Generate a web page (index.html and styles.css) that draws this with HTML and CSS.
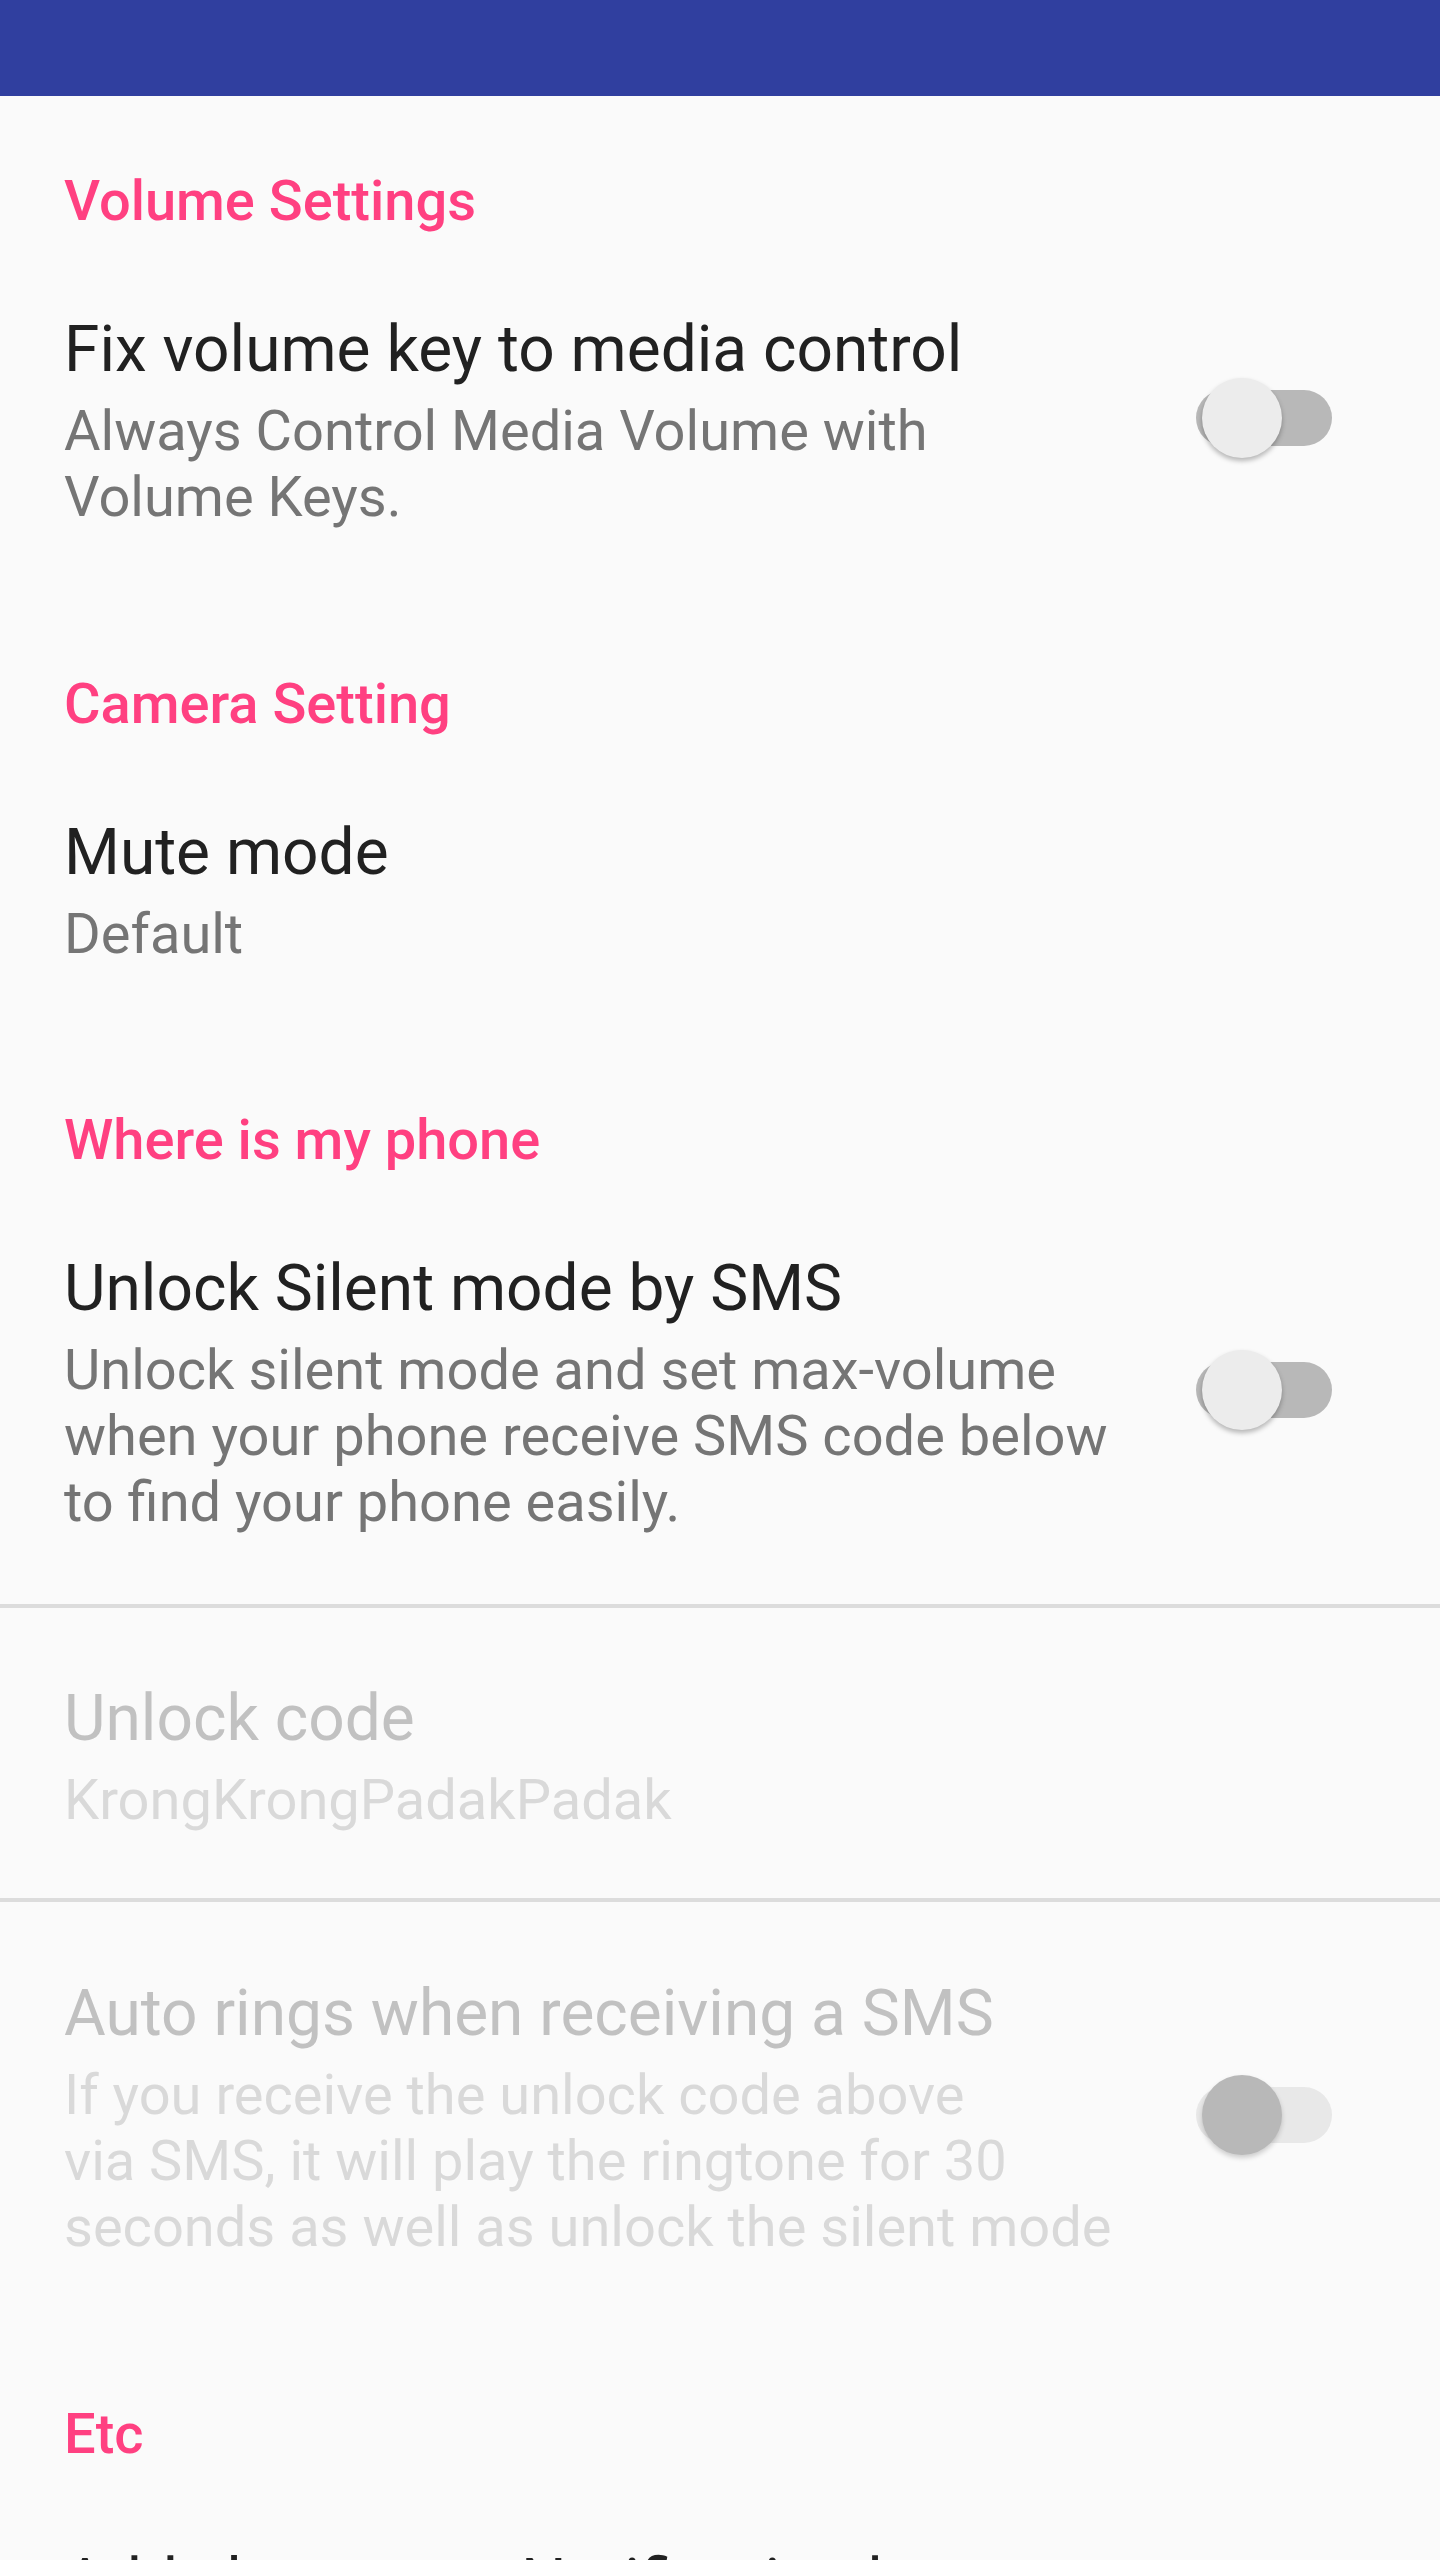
FILE: index.html
```html
<!DOCTYPE html>
<html lang="en">
<head>
    <meta charset="UTF-8">
    <meta name="viewport" content="width=device-width, initial-scale=1">
    <title>Settings</title>
    <link rel="stylesheet" href="styles.css">
</head>
<body>
    <div class="status-bar"></div>

    <div class="prefs">
        <div class="category">Volume Settings</div>
        <div class="pref pref-switch">
            <div class="pref-text">
                <div class="pref-title">Fix volume key to media control</div>
                <div class="pref-summary">Always Control Media Volume with Volume Keys.</div>
            </div>
            <div class="switch"><span class="thumb"></span></div>
        </div>

        <div class="category">Camera Setting</div>
        <div class="pref">
            <div class="pref-text">
                <div class="pref-title">Mute mode</div>
                <div class="pref-summary">Default</div>
            </div>
        </div>

        <div class="category">Where is my phone</div>
        <div class="pref pref-switch">
            <div class="pref-text">
                <div class="pref-title">Unlock Silent mode by SMS</div>
                <div class="pref-summary">Unlock silent mode and set max-volume when your phone receive SMS code below to find your phone easily.</div>
            </div>
            <div class="switch"><span class="thumb"></span></div>
        </div>
        <div class="divider"></div>
        <div class="pref pref-edit disabled">
            <div class="pref-text">
                <div class="pref-title">Unlock code</div>
                <div class="pref-summary">KrongKrongPadakPadak</div>
            </div>
        </div>
        <div class="divider"></div>
        <div class="pref pref-switch disabled">
            <div class="pref-text">
                <div class="pref-title">Auto rings when receiving a SMS</div>
                <div class="pref-summary">If you receive the unlock code above<br>via SMS, it will play the ringtone for 30<br>seconds as well as unlock the silent mode</div>
            </div>
            <div class="switch"><span class="thumb"></span></div>
        </div>

        <div class="category">Etc</div>
        <div class="pref">
            <div class="pref-text">
                <div class="pref-title">Add shortcut to Notification bar</div>
            </div>
        </div>
    </div>
</body>
</html>
```

FILE: styles.css
```css
body {
    margin: 0;
    padding: 0;
    background-color: #fafafa;
    font-family: Roboto, "Noto Sans", sans-serif;
}

.status-bar {
    height: 96px;
    background-color: #303f9f;
}

.category {
    padding: 72px 64px 4px;
    font-size: 56px;
    font-weight: 500;
    line-height: 66px;
    color: #ff4081;
}

.pref {
    display: flex;
    align-items: center;
    padding: 68px 108px 68px 64px;
}

.pref-switch {
    padding-bottom: 69px;
}

.pref-edit {
    padding-top: 67px;
    padding-bottom: 65px;
}

.pref-text {
    flex: 1;
}

.pref-title {
    font-size: 64px;
    line-height: 88px;
    color: #212121;
}

.pref-summary {
    margin-top: 4px;
    font-size: 56px;
    line-height: 66px;
    color: #757575;
}

.divider {
    height: 4px;
    background-color: #dcdcdc;
}

/* switch, off state */
.switch {
    position: relative;
    flex: none;
    width: 136px;
    height: 56px;
    margin-left: 72px;
    border-radius: 28px;
    background-color: #b8b8b8;
}

.thumb {
    position: absolute;
    top: -12px;
    left: 6px;
    width: 80px;
    height: 80px;
    border-radius: 50%;
    background-color: #ececec;
    box-shadow: 0 3px 5px rgba(0, 0, 0, 0.28);
}

.disabled .pref-title {
    color: #c1c1c1;
}

.disabled .pref-summary {
    color: #d9d9d9;
}

.disabled .switch {
    background-color: #e8e8e8;
}

.disabled .thumb {
    background-color: #b8b8b8;
    box-shadow: 0 3px 5px rgba(0, 0, 0, 0.18);
}
```
